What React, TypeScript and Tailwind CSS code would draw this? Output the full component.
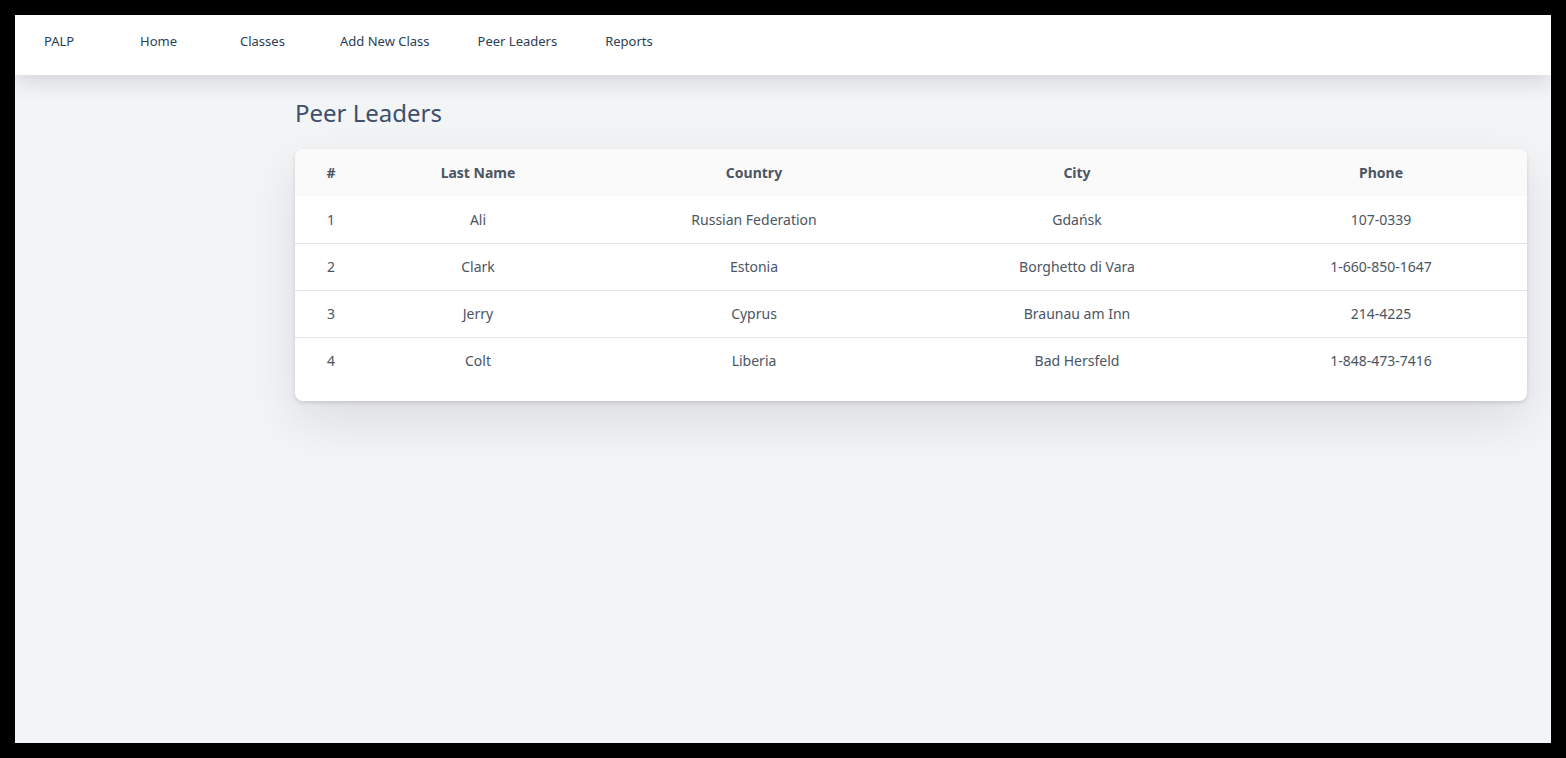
import React from "react";

type Leader = {
  id: number;
  lastName: string;
  country: string;
  city: string;
  phone: string;
};

const leaders: Leader[] = [
  { id: 1, lastName: "Ali", country: "Russian Federation", city: "Gdańsk", phone: "107-0339" },
  { id: 2, lastName: "Clark", country: "Estonia", city: "Borghetto di Vara", phone: "1-660-850-1647" },
  { id: 3, lastName: "Jerry", country: "Cyprus", city: "Braunau am Inn", phone: "214-4225" },
  { id: 4, lastName: "Colt", country: "Liberia", city: "Bad Hersfeld", phone: "1-848-473-7416" },
];

const links = ["Home", "Classes", "Add New Class", "Peer Leaders", "Reports"];

const Navbar: React.FC = () => {
  return (
    <nav className="relative z-10 h-[60px] bg-white shadow-[0_6px_22px_rgba(15,23,42,0.14)] flex items-center pb-[7px] pl-[29px]">
      <a className="w-[96px] text-[13px] text-[#2c3e55]">PALP</a>
      <ul className="flex items-center">
        {links.map((l) => (
          <li key={l} className="min-w-[100px] pr-[48px] text-[13px] text-[#2c3e55] whitespace-nowrap">
            {l}
          </li>
        ))}
      </ul>
    </nav>
  );
};

const LeadersTable: React.FC = () => {
  return (
    <div className="bg-white rounded-lg shadow-[0_2px_4px_rgba(0,0,0,0.12),0_20px_50px_rgba(15,23,42,0.10)] pb-[17px] overflow-hidden">
      <table className="w-full table-fixed border-collapse text-center text-[14px] text-[#4b5563]">
        <colgroup>
          <col className="w-[72px]" />
          <col className="w-[222px]" />
          <col className="w-[330px]" />
          <col className="w-[316px]" />
          <col />
        </colgroup>
        <thead className="bg-[#fafafa]">
          <tr className="h-[47px]">
            <th className="font-bold">#</th>
            <th className="font-bold">Last Name</th>
            <th className="font-bold">Country</th>
            <th className="font-bold">City</th>
            <th className="font-bold">Phone</th>
          </tr>
        </thead>
        <tbody>
          {leaders.map((p, i) => (
            <tr
              key={p.id}
              className={i < leaders.length - 1 ? "h-[47px] border-b border-[#e2e4e8]" : "h-[47px]"}
            >
              <td>{p.id}</td>
              <td>{p.lastName}</td>
              <td>{p.country}</td>
              <td>{p.city}</td>
              <td>{p.phone}</td>
            </tr>
          ))}
        </tbody>
      </table>
    </div>
  );
};

export default function App() {
  return (
    <div className="min-h-screen bg-black p-[15px]" style={{ fontFamily: '"Noto Sans", sans-serif' }}>
      <div className="h-[728px] bg-[#f3f4f6] flex flex-col overflow-hidden">
        <Navbar />
        <div className="flex flex-1">
          <aside className="w-64 shrink-0" />
          <main className="flex-1 px-6 pt-[22px]">
            <h1 className="text-[24px] leading-8 text-[#3d4f6b] mb-5">Peer Leaders</h1>
            <LeadersTable />
          </main>
        </div>
      </div>
    </div>
  );
}
